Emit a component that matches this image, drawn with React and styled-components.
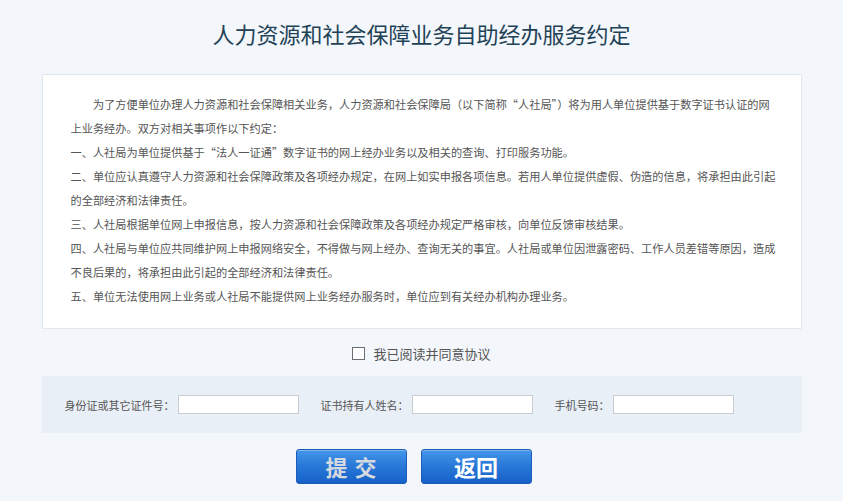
import styled, { createGlobalStyle } from 'styled-components'

const GlobalStyle = createGlobalStyle`
    html, body {
        margin: 0;
        padding: 0;
        background: #f3f7fb;
    }
    body {
        font-family: "Noto Sans CJK SC", "Noto Sans", sans-serif;
    }
`

const Page = styled.div`
    width: 760px;
    margin: 0 auto;
    padding-top: 18px;
    display: flex;
    flex-direction: column;
`

const Title = styled.h1`
    margin: 0;
    height: 30px;
    line-height: 30px;
    text-align: center;
    font-size: 22px;
    font-weight: 400;
    color: #1f4257;
`

const Card = styled.div`
    margin-top: 26px;
    background: #fff;
    border: 1px solid #e3e8ee;
    padding: 17px 20px 20px 28px;
    font-size: 11.2px;
    line-height: 24px;
    color: #555;
    p {
        margin: 0;
        white-space: nowrap;
    }
    .indent {
        text-indent: 2em;
    }
`

const AgreeRow = styled.label`
    margin-top: 12px;
    height: 24px;
    display: flex;
    align-items: center;
    justify-content: center;
    gap: 8px;
    font-size: 13px;
    color: #555;
    span.box {
        width: 11px;
        height: 11px;
        border: 1px solid #6b6f75;
        background: #fff;
    }
`

const FormBar = styled.div`
    margin-top: 11px;
    height: 57px;
    background: #e9eff7;
    display: flex;
    align-items: center;
    padding-left: 23px;
    gap: 22px;
`

const Field = styled.div`
    display: flex;
    align-items: center;
    gap: 3px;
    font-size: 11px;
    color: #555;
    input {
        width: 121px;
        height: 19px;
        box-sizing: border-box;
        border: 1px solid #c9cdd3;
        background: #fff;
        outline: none;
    }
`

const Buttons = styled.div`
    margin-top: 16px;
    display: flex;
    justify-content: center;
    gap: 14px;
    padding-right: 16px;
`

const Button = styled.button`
    width: 111px;
    height: 35px;
    border-radius: 3px;
    border: 1px solid #1a5cb8;
    background: linear-gradient(180deg, #4596ea 0%, #2a7ad9 45%, #1661c9 100%);
    box-shadow: inset 0 1px 0 rgba(255, 255, 255, 0.3);
    font-family: "Noto Sans CJK SC", sans-serif;
    font-size: 22px;
    font-weight: 700;
    line-height: 33px;
    padding: 0;
    color: #fff;
    letter-spacing: ${({ $spaced }) => ($spaced ? '7px' : '0')};
    text-indent: ${({ $spaced }) => ($spaced ? '7px' : '0')};
    span {
        color: ${({ $silver }) => ($silver ? '#d6dade' : '#fff')};
    }
`

export default function App() {
    return (
        <>
            <GlobalStyle />
            <Page>
                <Title>人力资源和社会保障业务自助经办服务约定</Title>
                <Card>
                    <p className="indent">
                        为了方便单位办理人力资源和社会保障相关业务，人力资源和社会保障局（以下简称“人社局”）将为用人单位提供基于数字证书认证的网
                    </p>
                    <p>上业务经办。双方对相关事项作以下约定：</p>
                    <p>一、人社局为单位提供基于“法人一证通”数字证书的网上经办业务以及相关的查询、打印服务功能。</p>
                    <p>
                        二、单位应认真遵守人力资源和社会保障政策及各项经办规定，在网上如实申报各项信息。若用人单位提供虚假、伪造的信息，将承担由此引起
                    </p>
                    <p>的全部经济和法律责任。</p>
                    <p>三、人社局根据单位网上申报信息，按人力资源和社会保障政策及各项经办规定严格审核，向单位反馈审核结果。</p>
                    <p>
                        四、人社局与单位应共同维护网上申报网络安全，不得做与网上经办、查询无关的事宜。人社局或单位因泄露密码、工作人员差错等原因，造成
                    </p>
                    <p>不良后果的，将承担由此引起的全部经济和法律责任。</p>
                    <p>五、单位无法使用网上业务或人社局不能提供网上业务经办服务时，单位应到有关经办机构办理业务。</p>
                </Card>
                <AgreeRow>
                    <span className="box" />
                    我已阅读并同意协议
                </AgreeRow>
                <FormBar>
                    <Field>
                        身份证或其它证件号：
                        <input type="text" />
                    </Field>
                    <Field>
                        证书持有人姓名：
                        <input type="text" />
                    </Field>
                    <Field>
                        手机号码：
                        <input type="text" />
                    </Field>
                </FormBar>
                <Buttons>
                    <Button $spaced $silver>
                        <span>提交</span>
                    </Button>
                    <Button>
                        <span>返回</span>
                    </Button>
                </Buttons>
            </Page>
        </>
    )
}
